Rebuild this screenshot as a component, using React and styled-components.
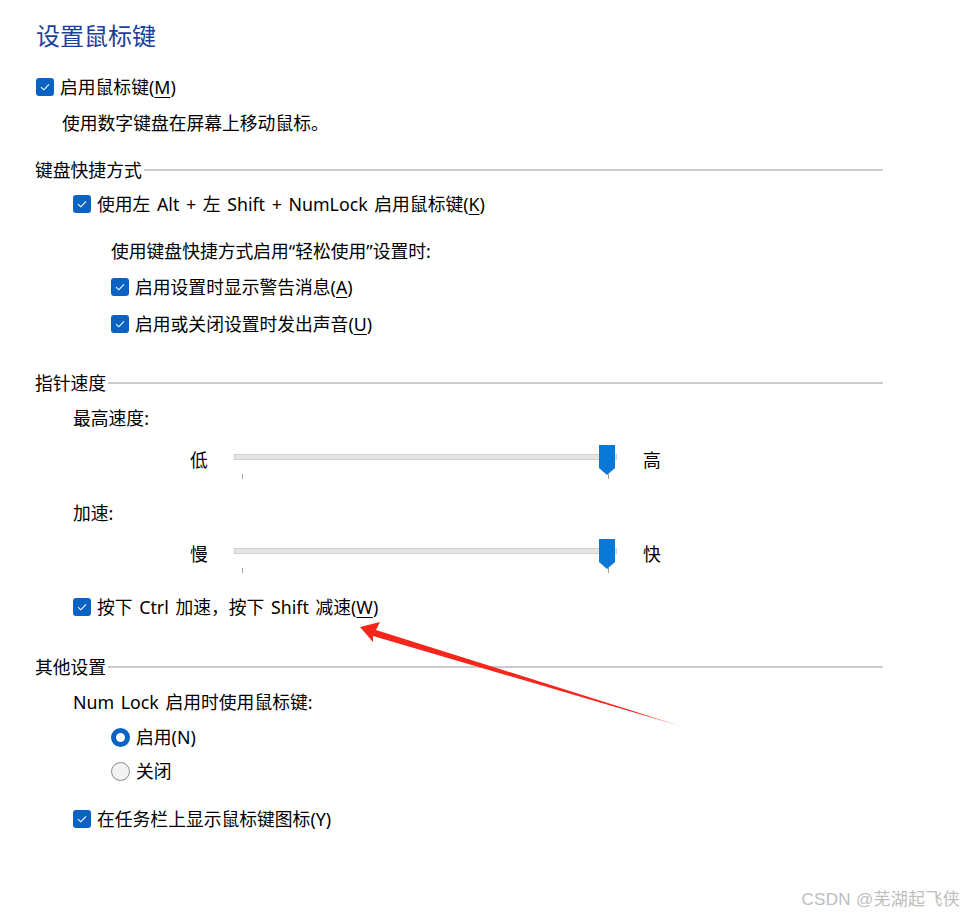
import React from "react";
import styled, { createGlobalStyle } from "styled-components";

const Global = createGlobalStyle`
  html, body { margin: 0; padding: 0; background: #ffffff; }
  body {
    font-family: "Noto Sans", "Noto Sans CJK SC", sans-serif;
    color: #000;
    font-size: 17.8px;
    word-spacing: 2px;
  }
`;

const Page = styled.div`
  position: relative;
  width: 964px;
  height: 916px;
  overflow: hidden;
  box-sizing: border-box;
  padding: 19px 0 0 35px;
`;

const Content = styled.div`
  width: 848px;
  display: flex;
  flex-direction: column;
`;

const Title = styled.h1`
  margin: 0 0 0 1px;
  height: 32px;
  line-height: 32px;
  font-size: 24px;
  font-weight: 400;
  color: #1d3f9c;
  font-family: "Noto Sans CJK SC", sans-serif;
`;

const Row = styled.div`
  display: flex;
  align-items: center;
  gap: 6px;
  height: 26px;
  margin-top: ${(p) => p.$mt || 0}px;
  padding-left: ${(p) => p.$indent || 0}px;
  line-height: 26px;
  white-space: nowrap;
`;

const Text = styled.div`
  height: 26px;
  line-height: 26px;
  margin-top: ${(p) => p.$mt || 0}px;
  padding-left: ${(p) => p.$indent || 0}px;
  white-space: nowrap;
`;

const Header = styled.div`
  display: flex;
  align-items: center;
  height: 26px;
  margin-top: ${(p) => p.$mt || 0}px;
  white-space: nowrap;
  &::after {
    content: "";
    flex: 1;
    height: 2px;
    background: #cbcbcb;
    margin-left: 2px;
    margin-top: 1px;
  }
`;

const Box = styled.span`
  width: 18px;
  height: 18px;
  border-radius: 3px;
  background: #0a63c2;
  display: inline-flex;
  align-items: center;
  justify-content: center;
  flex: none;
`;

const Radio = styled.span`
  width: 19px;
  height: 19px;
  box-sizing: border-box;
  border-radius: 50%;
  flex: none;
  border: ${(p) => (p.$on ? "5px solid #0a63c2" : "1px solid #8a8a8a")};
  background: ${(p) => (p.$on ? "#ffffff" : "#f3f3f3")};
`;

const Key = styled.span`
  text-decoration: underline;
  text-underline-offset: 3px;
  text-decoration-thickness: 1px;
`;

const SliderRow = styled.div`
  display: flex;
  align-items: center;
  height: 40px;
  margin-top: ${(p) => p.$mt || 0}px;
  padding-left: 155px;
`;

const SliderLabel = styled.span`
  width: 18px;
  line-height: 26px;
  flex: none;
`;

const SliderArea = styled.div`
  position: relative;
  width: 383px;
  height: 40px;
  margin: 0 26px 0 26px;
  flex: none;
`;

const Track = styled.div`
  position: absolute;
  left: 0;
  right: 0;
  top: 14px;
  height: 6px;
  box-sizing: border-box;
  background: #e5e5e5;
  border: 1px solid #d0d0d0;
`;

const Tick = styled.div`
  position: absolute;
  top: 34px;
  width: 1px;
  height: 5px;
  background: #a0a0a0;
`;

const Thumb = styled.svg`
  position: absolute;
  top: 5px;
  left: 365px;
`;

const Watermark = styled.div`
  position: absolute;
  right: 4px;
  bottom: 6px;
  font-size: 17px;
  color: #bdbdbd;
  font-family: "Liberation Sans", "Noto Sans CJK SC", sans-serif;
  letter-spacing: 0.3px;
  word-spacing: 0;
`;

const Arrow = styled.svg`
  position: absolute;
  left: 0;
  top: 0;
  pointer-events: none;
`;

const Check = () => (
  <Box>
    <svg width="12" height="10" viewBox="0 0 12 10">
      <path d="M2 5.2 L4.8 7.8 L10 2.4" fill="none" stroke="#fff" strokeWidth="1.1" />
    </svg>
  </Box>
);

const Slider = ({ left, right, mt }) => (
  <SliderRow $mt={mt}>
    <SliderLabel>{left}</SliderLabel>
    <SliderArea>
      <Track />
      <Tick style={{ left: 8 }} />
      <Tick style={{ left: 374 }} />
      <Thumb width="17" height="31" viewBox="0 0 17 31">
        <path d="M0 0 H16 V23 L8 30 L0 23 Z" fill="#0a78d7" />
      </Thumb>
    </SliderArea>
    <SliderLabel>{right}</SliderLabel>
  </SliderRow>
);

export default function App() {
  return (
    <Page>
      <Global />
      <Content>
        <Title>设置鼠标键</Title>
        <Row $mt={23} $indent={1}>
          <Check />
          <span>启用鼠标键(<Key>M</Key>)</span>
        </Row>
        <Text $mt={10} $indent={27}>使用数字键盘在屏幕上移动鼠标。</Text>

        <Header $mt={20}>键盘快捷方式</Header>
        <Row $mt={9} $indent={38}>
          <Check />
          <span>使用左 Alt + 左 Shift + NumLock 启用鼠标键(<Key>K</Key>)</span>
        </Row>
        <Text $mt={21} $indent={76}>使用键盘快捷方式启用“轻松使用”设置时:</Text>
        <Row $mt={10} $indent={76}>
          <Check />
          <span>启用设置时显示警告消息(<Key>A</Key>)</span>
        </Row>
        <Row $mt={11} $indent={76}>
          <Check />
          <span>启用或关闭设置时发出声音(<Key>U</Key>)</span>
        </Row>

        <Header $mt={32}>指针速度</Header>
        <Text $mt={10} $indent={38}>最高速度:</Text>
        <Slider left="低" right="高" mt={9} />
        <Text $mt={20} $indent={38}>加速:</Text>
        <Slider left="慢" right="快" mt={8} />
        <Row $mt={20} $indent={38}>
          <Check />
          <span>按下 Ctrl 加速，按下 Shift 减速(<Key>W</Key>)</span>
        </Row>

        <Header $mt={33}>其他设置</Header>
        <Text $mt={10} $indent={38}>Num Lock 启用时使用鼠标键:</Text>
        <Row $mt={9} $indent={76}>
          <Radio $on />
          <span>启用(N)</span>
        </Row>
        <Row $mt={8} $indent={76}>
          <Radio />
          <span>关闭</span>
        </Row>
        <Row $mt={22} $indent={38}>
          <Check />
          <span>在任务栏上显示鼠标键图标(Y)</span>
        </Row>
      </Content>

      <Arrow width="964" height="916" viewBox="0 0 964 916">
        <defs>
          <linearGradient id="fade" x1="360" y1="627" x2="687" y2="728" gradientUnits="userSpaceOnUse">
            <stop offset="0" stopColor="#f5261b" />
            <stop offset="0.85" stopColor="#f5261b" />
            <stop offset="1" stopColor="#f5261b" stopOpacity="0.2" />
          </linearGradient>
        </defs>
        <path
          d="M360 627 L380 622 L376 630 L687 728 L373 636 L373 642 Z"
          fill="url(#fade)"
        />
      </Arrow>

      <Watermark>CSDN @芜湖起飞侠</Watermark>
    </Page>
  );
}
